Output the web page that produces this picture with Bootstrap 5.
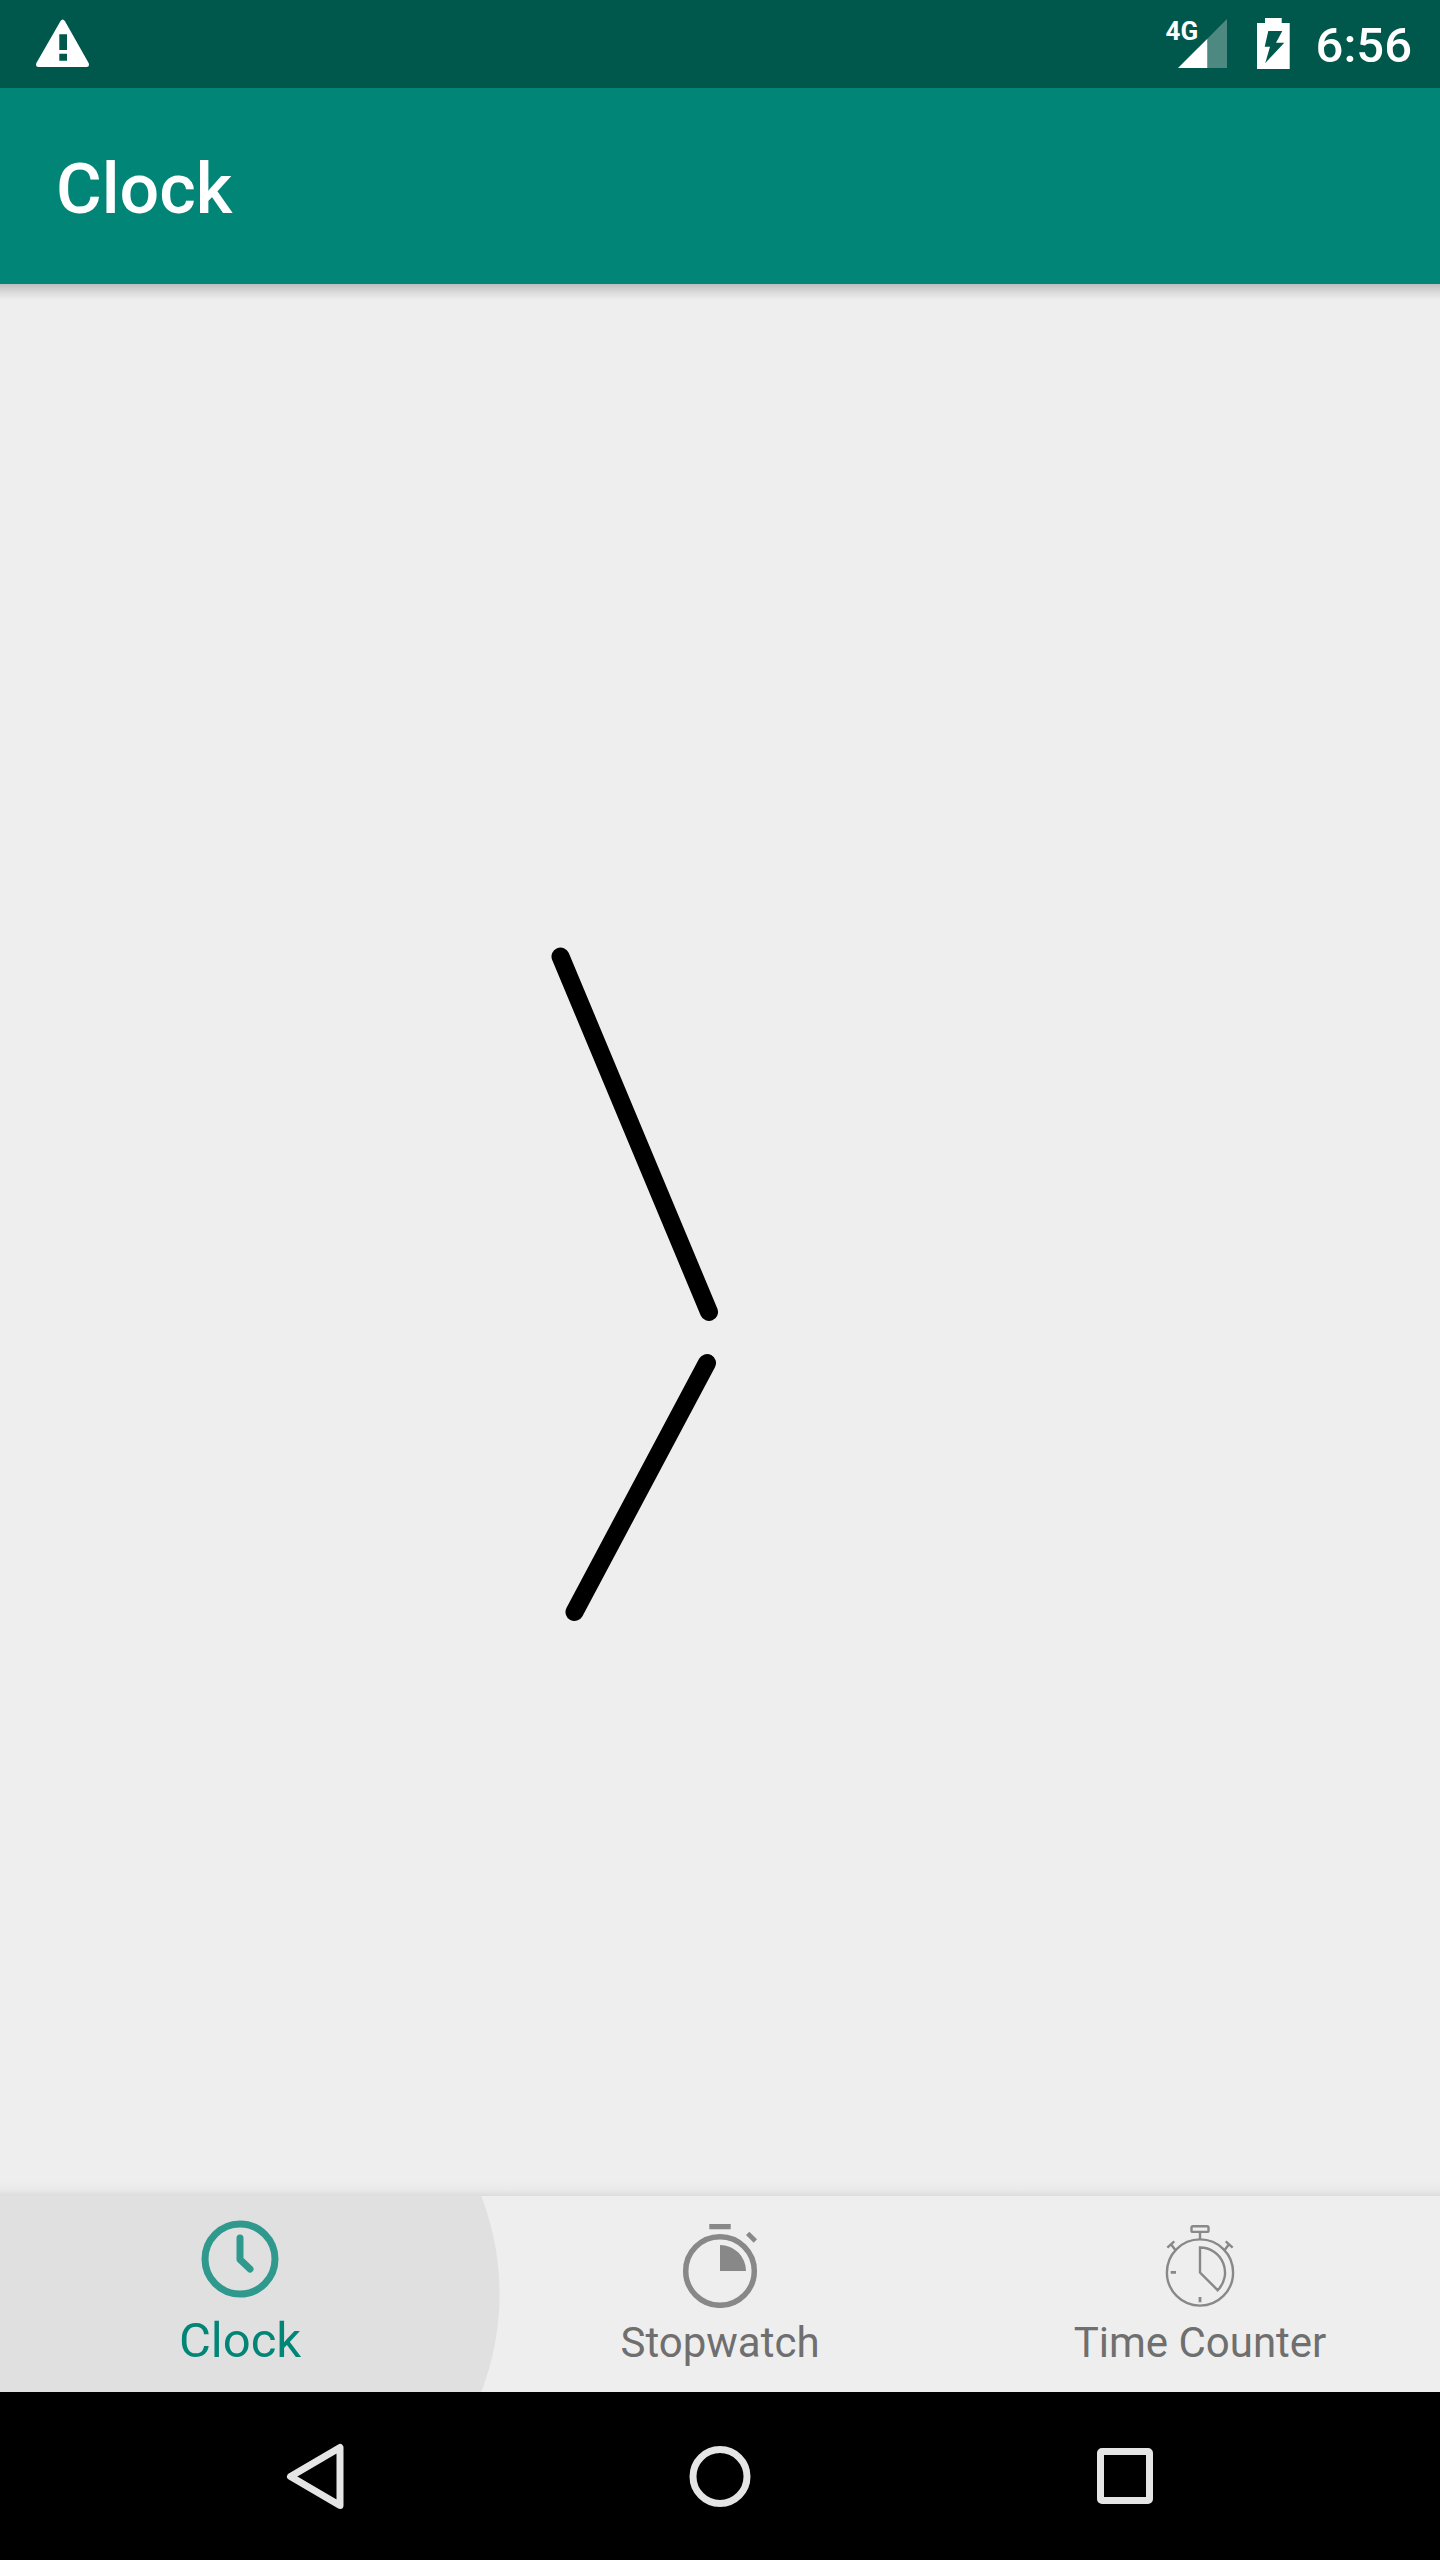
<!DOCTYPE html>
<html lang="en">
<head>
<meta charset="utf-8">
<meta name="viewport" content="width=device-width, initial-scale=1">
<title>Clock</title>
<link href="https://cdn.jsdelivr.net/npm/bootstrap@5.3.0/dist/css/bootstrap.min.css" rel="stylesheet">
<style>
  body { font-family: Roboto, "Liberation Sans", sans-serif; background: #eeeeee; }
  svg { display: block; flex: none; }
  .status-bar { height: 88px; background: #00574b; padding: 0 28px 0 36px; color: #fff; }
  .status-icons { gap: 26px; }
  .status-time { font-size: 49px; line-height: 88px; font-weight: 500; padding-top: 2px; }
  .network-type { position: absolute; left: 0; top: 16px; font-size: 26px; line-height: 30px; font-weight: 700; }
  .app-bar { height: 196px; background: #008577; padding: 6px 56px 0; color: #fff; }
  .app-title { font-size: 70px; line-height: 84px; font-weight: 500; }
  .face-area { padding-top: 196px;
    background: linear-gradient(#bdbdbd, #dadada 8px, #eeeeee 16px) top / 100% 16px no-repeat,
                linear-gradient(#eeeeee, #e9e9e9 8px, #dcdcdc 14px) bottom / 100% 14px no-repeat; }
  .clock-face { width: 800px; max-width: 100%; }
  .tab-bar { height: 196px; background: radial-gradient(circle at 228px 50%, #e0e0e0 271px, #eeeeee 272px); }
  .tab-item { flex: 1 1 0; padding: 28px 0 21px; font-size: 42px; line-height: 56px; color: #6f6f6f; }
  .tab-item svg { color: #888888; }
  .tab-item.active { padding: 21px 0 23px; font-size: 49px; color: #008577; }
  .tab-item.active svg { color: #2e998c; }
  .system-bar { height: 168px; padding: 0 112px; background: #000; }
  .system-bar button { flex: 1 1 0; color: #e5e5e5; }
</style>
<script src="https://cdn.jsdelivr.net/npm/bootstrap@5.3.0/dist/js/bootstrap.bundle.min.js"></script>
</head>
<body>
<div class="d-flex flex-column min-vh-100">
  <div class="status-bar d-flex justify-content-between">
    <svg width="53" height="88" viewBox="36 0 53 88" role="img" aria-label="Warning">
      <path fill="#fff" fill-rule="evenodd" stroke="none" d="M60.400 21.200Q62.700 18 65 21.200L88.600 63Q90 66.800 86.500 67H38.500Q35 66.800 36.400 63ZM59.300 34.300V50H67V34.300ZM59.300 53.700V60.700H67V53.700Z"/>
    </svg>
    <div class="status-icons d-flex">
      <div class="position-relative">
        <span class="network-type">4G</span>
        <svg width="65" height="88" viewBox="1166 0 65 88" role="img" aria-label="Signal">
          <path fill="#fff" fill-opacity=".3" d="M1207.300 38.700L1227 19V68H1207.300Z"/>
          <path fill="#fff" d="M1178 68L1207.300 38.700V68Z"/>
        </svg>
      </div>
      <svg width="33" height="88" viewBox="1257 0 33 88" role="img" aria-label="Battery charging">
        <path fill="#fff" fill-rule="evenodd" d="M1265 18H1281.700V23H1289.700V69H1257V23H1265ZM1268.300 31L1264.700 46.700H1270L1265.300 63L1284.300 42.700H1276L1282.300 31Z"/>
      </svg>
      <span class="status-time">6:56</span>
    </div>
  </div>

  <header class="app-bar d-flex align-items-center">
    <h1 class="app-title m-0">Clock</h1>
  </header>

  <main class="face-area flex-fill d-flex align-items-center justify-content-center">
    <svg class="clock-face" viewBox="-400 -400 800 800" role="img" aria-label="6:56" stroke="#000" stroke-width="18" stroke-linecap="round">
      <path d="M-159.500 -381.500L-11 -26"/>
      <path d="M-13 25L-145.500 274"/>
    </svg>
  </main>

  <nav class="tab-bar d-flex">
    <a href="#clock" class="tab-item active d-flex flex-column align-items-center justify-content-between text-decoration-none" aria-current="page">
      <svg width="84" height="84" viewBox="0 0 84 84" fill="none" stroke="currentColor" stroke-width="7" stroke-linecap="round" stroke-linejoin="round">
        <circle cx="42" cy="42" r="35"/>
        <path d="M42 21V42.500L52 52"/>
      </svg>
      <span>Clock</span>
    </a>
    <a href="#stopwatch" class="tab-item d-flex flex-column align-items-center justify-content-between text-decoration-none">
      <svg width="84" height="84" viewBox="0 0 84 84" fill="currentColor">
        <circle cx="42" cy="47" r="34.300" fill="none" stroke="currentColor" stroke-width="5.500"/>
        <path d="M31.300 0H52.700V5.300H31.300ZM71.300 7.700L79 15.300L75.700 18.700L68 11ZM42 21A26 26 0 0 1 68 47H42Z"/>
      </svg>
      <span>Stopwatch</span>
    </a>
    <a href="#counter" class="tab-item d-flex flex-column align-items-center justify-content-between text-decoration-none">
      <svg width="84" height="84" viewBox="0 0 84 84" fill="none" stroke="currentColor" stroke-width="2.400">
        <circle cx="42" cy="48.500" r="33.100"/>
        <rect x="33.500" y="2.300" width="17" height="5.600" rx="1.500"/>
        <path d="M42 8V15.500M9.300 23.600L16.300 17.400M13 20.300L17.700 26.500M74.700 23.600L67.700 17.400M71 20.300L66.300 26.500M42 48.500V23.500A25 25 0 0 1 59.700 66.200Z"/>
        <path stroke-width="2.800" d="M12.700 48.300H18M42 73V78.300"/>
      </svg>
      <span>Time Counter</span>
    </a>
  </nav>

  <div class="system-bar d-flex">
    <button type="button" class="btn border-0 rounded-0 p-0 d-flex align-items-center justify-content-center" aria-label="Back">
      <svg width="84" height="84" viewBox="0 0 84 84" fill="none" stroke="currentColor" stroke-width="7" stroke-linejoin="round"><path d="M17.500 42.500L67 13.500V71.500Z"/></svg>
    </button>
    <button type="button" class="btn border-0 rounded-0 p-0 d-flex align-items-center justify-content-center" aria-label="Home">
      <svg width="84" height="84" viewBox="0 0 84 84" fill="none" stroke="currentColor" stroke-width="7"><circle cx="42" cy="42.500" r="27"/></svg>
    </button>
    <button type="button" class="btn border-0 rounded-0 p-0 d-flex align-items-center justify-content-center" aria-label="Recent apps">
      <svg width="84" height="84" viewBox="0 0 84 84" fill="none" stroke="currentColor" stroke-width="7" stroke-linejoin="round"><rect x="17.500" y="17.500" width="49" height="49" rx="1.500"/></svg>
    </button>
  </div>
</div>
</body>
</html>
